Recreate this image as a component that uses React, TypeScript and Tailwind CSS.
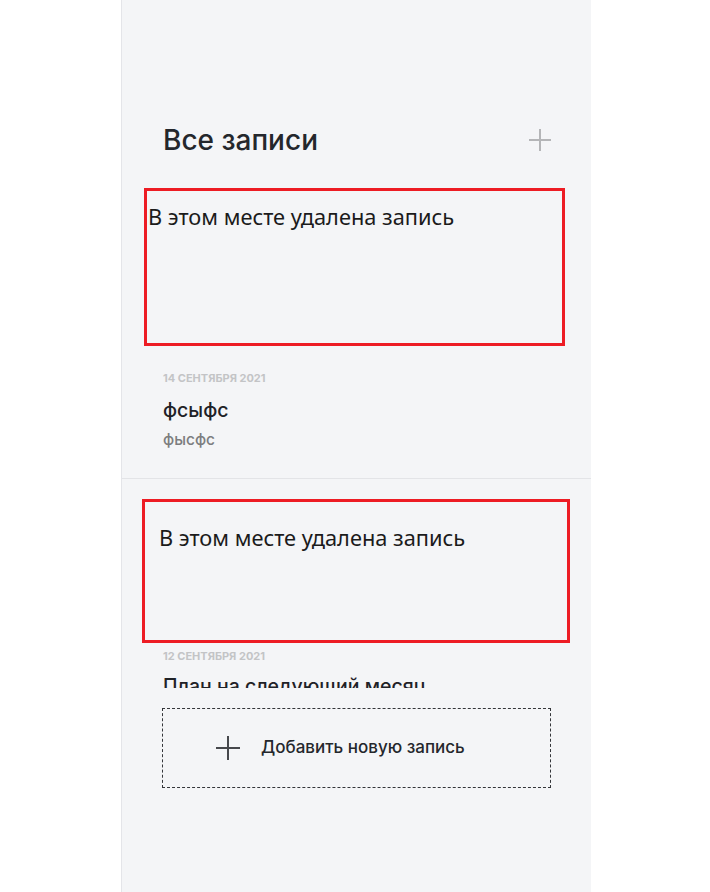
const appFont = { fontFamily: 'Inter, "Noto Sans", sans-serif' };
const noteFont = { fontFamily: '"Noto Sans", "Open Sans", sans-serif' };

function Plus({ size, stroke, color }: { size: number; stroke: number; color: string }) {
  return (
    <svg width={size} height={size} viewBox={`0 0 ${size} ${size}`} fill="none">
      <path d={`M${size / 2} 0V${size}M0 ${size / 2}H${size}`} stroke={color} strokeWidth={stroke} />
    </svg>
  );
}

function Removed({ className }: { className: string }) {
  return (
    <div className={`border-[3px] border-[#ed1c24] ${className}`}>
      <p className="text-[21.8px] leading-[28px] text-[#1b1b1b]" style={noteFont}>
        В этом месте удалена запись
      </p>
    </div>
  );
}

export default function App() {
  return (
    <div className="min-h-screen bg-white" style={appFont}>
      <aside className="ml-[121px] flex h-[892px] w-[470px] flex-col border-l border-[#e4e5e9] bg-[#f4f5f7]">
        <header className="mt-[122px] flex h-[36px] items-center justify-between pl-[41px] pr-[40px]">
          <h1 className="text-[28px] font-medium leading-[36px] text-[#24272c]">Все записи</h1>
          <button className="flex h-[22px] w-[22px] items-center justify-center">
            <Plus size={22} stroke={2} color="#b4b5b7" />
          </button>
        </header>

        <div className="mt-[30px] h-[500px] overflow-hidden">
          <div className="border-b border-[#e3e4e7] pb-[28px]">
            <Removed className="ml-[22px] mr-[26px] h-[158px] pl-[1px] pt-[12px]" />
            <div className="pl-[41px]">
              <div className="mt-[25px] text-[11px] font-bold uppercase leading-[14px] text-[#c3c4c6]">
                14 сентября 2021
              </div>
              <div className="mt-[13px] text-[19.5px] font-medium leading-[25px] text-[#1f2227]">фсыфс</div>
              <div className="mt-[7px] text-[15.5px] font-medium leading-[20px] text-[#7c7d80]">фысфс</div>
            </div>
          </div>

          <div>
            <Removed className="ml-[20px] mr-[21px] mt-[20px] h-[144px] pl-[14px] pt-[22px]" />
            <div className="pl-[41px]">
              <div className="mt-[6px] text-[11px] font-bold uppercase leading-[14px] text-[#c3c4c6]">
                12 сентября 2021
              </div>
              <div className="mt-[11px] text-[19.5px] font-medium leading-[25px] text-[#1f2227]">
                План на следующий месяц
              </div>
            </div>
          </div>
        </div>

        <button className="ml-[40px] mr-[40px] mt-[20px] flex h-[80px] items-center gap-[21px] border border-dashed border-[#34363a] pl-[53px]">
          <Plus size={24} stroke={2} color="#46484c" />
          <span className="text-[17px] font-medium text-[#24272c]">Добавить новую запись</span>
        </button>
      </aside>
    </div>
  );
}
